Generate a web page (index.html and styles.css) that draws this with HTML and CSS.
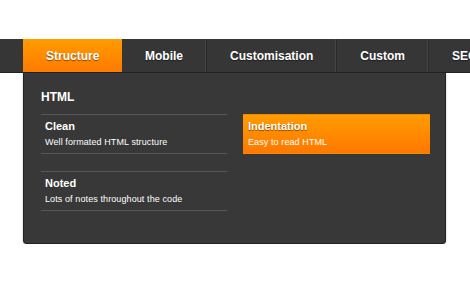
FILE: index.html
```html
<!DOCTYPE html>
<html lang="en">

<head>
    <meta charset="UTF-8">
    <meta name="viewport" content="width=device-width, initial-scale=1.0">
    <title>Mega Menu</title>
    <link rel="stylesheet" href="styles.css">
</head>

<body>

    <nav class="menu">
        <ul class="menu-bar">
            <li class="menu-spacer"></li>
            <li class="menu-item active"><a href="#">Structure</a></li>
            <li class="menu-item"><a href="#">Mobile</a></li>
            <li class="menu-item"><a href="#">Customisation</a></li>
            <li class="menu-item"><a href="#">Custom</a></li>
            <li class="menu-item"><a href="#">SEO</a></li>
        </ul>
    </nav>

    <!-- Dropdown for the active "Structure" tab -->
    <div class="dropdown">
        <h2>HTML</h2>
        <div class="dropdown-grid">
            <a class="dropdown-link" href="#">
                <strong>Clean</strong>
                <span>Well formated HTML structure</span>
            </a>
            <a class="dropdown-link hover" href="#">
                <strong>Indentation</strong>
                <span>Easy to read HTML</span>
            </a>
            <a class="dropdown-link" href="#">
                <strong>Noted</strong>
                <span>Lots of notes throughout the code</span>
            </a>
        </div>
    </div>

</body>

</html>
```

FILE: styles.css
```css
* {
    margin: 0;
    padding: 0;
    box-sizing: border-box;
}

html,
body {
    overflow: hidden;
}

body {
    font-family: 'Liberation Sans', Arial, sans-serif;
    background-color: #fff;
    padding-top: 39px;
}

.menu {
    width: 100%;
    background-color: #363636;
    border-bottom: 1px solid #222;
}

.menu-bar {
    list-style: none;
    display: flex;
    height: 33px;
    white-space: nowrap;
}

.menu-spacer {
    width: 23px;
    flex-shrink: 0;
}

.menu-item {
    flex-shrink: 0;
    border-right: 1px solid #2a2a2a;
    box-shadow: inset -1px 0 0 #444;
}

.menu-item > a {
    display: block;
    height: 33px;
    line-height: 34px;
    padding: 0 23px;
    color: #fff;
    font-size: 12px;
    font-weight: bold;
    text-decoration: none;
    text-shadow: 0 1px 1px rgba(0, 0, 0, 0.5);
}

.menu-item.active {
    border-right: none;
    box-shadow: none;
}

.menu-item.active > a {
    background: linear-gradient(#ff9c00, #ff7a00);
    width: 99px;
    text-align: center;
}

/* Dropdown panel */
.dropdown {
    margin-left: 23px;
    width: 423px;
    height: 171px;
    background-color: #383838;
    border: 1px solid #232323;
    border-top: none;
    border-radius: 0 0 4px 4px;
    box-shadow: 0 1px 2px rgba(0, 0, 0, 0.3);
    padding: 17px 17px 0 17px;
}

.dropdown h2 {
    color: #fff;
    font-size: 12px;
    line-height: 14px;
    font-weight: bold;
    margin-bottom: 10px;
}

.dropdown-grid {
    display: grid;
    grid-template-columns: 186px 187px;
    column-gap: 16px;
    row-gap: 17px;
}

.dropdown-link {
    display: flex;
    flex-direction: column;
    gap: 4px;
    height: 40px;
    padding: 5px 4px 0 4px;
    border-top: 1px solid #575757;
    border-bottom: 1px solid #575757;
    text-decoration: none;
    color: #fff;
}

.dropdown-link strong {
    font-size: 11px;
    line-height: 13px;
}

.dropdown-link span {
    font-size: 9px;
    line-height: 11px;
    letter-spacing: 0.1px;
}

.dropdown-link.hover {
    background: linear-gradient(#ff9c00, #ff7800);
    border-color: #f08a00;
    padding-left: 5px;
}

.dropdown-link.hover strong {
    text-shadow: 0 1px 1px rgba(0, 0, 0, 0.5);
}
```
